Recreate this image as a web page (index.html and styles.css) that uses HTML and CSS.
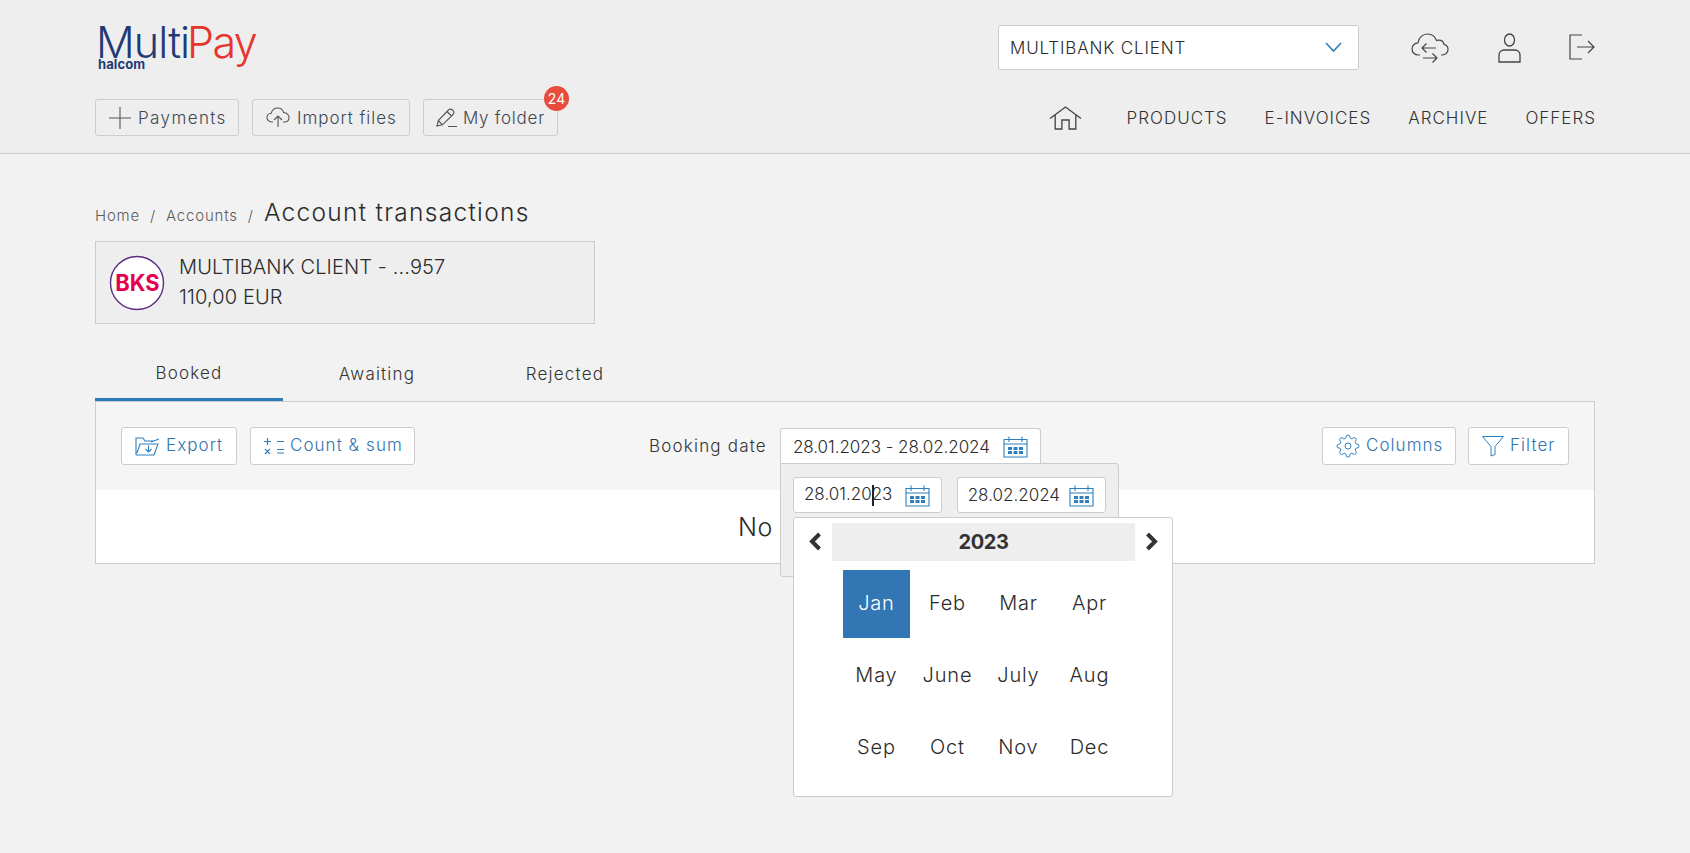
FILE: index.html
```html
<!DOCTYPE html>
<html lang="en">
<head>
<meta charset="utf-8">
<title>MultiPay - Account transactions</title>
<link rel="stylesheet" href="styles.css">
</head>
<body>
<svg class="sprite" aria-hidden="true">
  <symbol id="cal" viewBox="0 0 25 23">
    <path d="M1 4.5H24V22H1Z M1 9H24 M6 1.5V7 M19 1.5V7" fill="none" stroke="#2f7fbc" stroke-width="1.1"/>
    <path d="M5 12h4v3H5Z M10.5 12h4v3h-4Z M16 12h4v3h-4Z M5 16h4v3H5Z M10.5 16h4v3h-4Z M16 16h4v3h-4Z" fill="#2f7fbc"/>
  </symbol>
</svg>

<header class="header">
  <div class="top-row">
    <svg class="logo" width="160" height="48" viewBox="0 0 160 48" role="img" aria-label="MultiPay halcom">
      <text x="-1" y="33" class="logo-multi">Multi</text>
      <text x="90" y="33" class="logo-pay">Pay</text>
      <text x="1" y="44" class="logo-halcom">halcom</text>
    </svg>
    <div class="top-right">
      <div class="client-select">
        <span>MULTIBANK CLIENT</span>
        <svg width="17" height="11" viewBox="0 0 17 11"><path d="M1 1l7.5 8L16 1" fill="none" stroke="#2f7fbc" stroke-width="1.6"/></svg>
      </div>
      <svg class="ico-cloud" width="38" height="31" viewBox="0 0 38 31" fill="none" stroke="#444" stroke-width="1.2">
        <path d="M9 22H7.500C3.500 22 1 19.200 1 16c0-3.300 2.500-6 6-6.200C7.500 4.500 12 1 16.500 1c4.300 0 7.700 2.700 9 6.500 1-.5 1.600-.4 2.500-.4 2.800.1 4.500 2 5 4.300 2.500.6 4 2.700 4 5.100 0 3-2.500 5.500-5.500 5.500H30"/>
        <path d="M25 15H11 M15.500 10.500L11 15l4.500 4.500 M12 25H26 M21.500 20.500L26 25l-4.500 4.500"/>
      </svg>
      <svg class="ico-user" width="23" height="30" viewBox="0 0 23 30" fill="none" stroke="#444" stroke-width="1.3">
        <ellipse cx="11.500" cy="7" rx="5" ry="6"/>
        <path d="M1 29V22c0-3 2.500-5 5-5h11c2.500 0 5 2 5 5v7Z"/>
      </svg>
      <svg class="ico-exit" width="26" height="26" viewBox="0 0 26 26" fill="none" stroke="#444" stroke-width="1.200">
        <path d="M13 1H1V25H13 M8 13H25 M19 7l6 6-6 6"/>
      </svg>
    </div>
  </div>
  <div class="sub-row">
    <div class="actions">
      <a class="act act-pay">
        <svg width="22" height="22" viewBox="0 0 22 22" fill="none" stroke="#555" stroke-width="1.1"><path d="M0 11H22 M11 0V22"/></svg>
        <span>Payments</span>
      </a>
      <a class="act act-imp">
        <svg width="24" height="21" viewBox="0 0 24 21" fill="none" stroke="#555" stroke-width="1.100"><path d="M7 15H5.500C3 15 1 13 1 10.500S3 6.300 5.200 6.200C6 3 8.800 1 11.700 1c3 0 5.300 2 6.100 4.800 3-.2 5.200 2 5.200 4.700S21 15 18.500 15H17 M12 20V9 M8 13l4-4 4 4"/></svg>
        <span>Import files</span>
      </a>
      <a class="act act-fold">
        <svg width="21" height="19" viewBox="0 0 21 19" fill="none" stroke="#555" stroke-width="1.100"><path d="M1 18l1.300-5.500L12.500 2c1.200-1.200 2.800-1.200 4 0l.5.500c1.200 1.200 1.200 2.800 0 4L6.500 16.800Z M2.300 12.500l4.200 4.300 M11 3.500l4.500 4.500 M12 18.500H21"/></svg>
        <span>My folder</span>
        <b class="badge">24</b>
      </a>
    </div>
    <nav class="nav">
      <svg class="ico-home" width="33" height="24" viewBox="0 0 32 24" preserveAspectRatio="none" fill="none" stroke="#444" stroke-width="1.300"><path d="M1 12.500L16 1l15 11.500 M6 9v14h6.500v-9h7v9H26V9"/></svg>
      <a>PRODUCTS</a>
      <a>E-INVOICES</a>
      <a>ARCHIVE</a>
      <a>OFFERS</a>
    </nav>
  </div>
</header>

<main class="main">
  <div class="crumbs">
    <a>Home</a><i>/</i><a>Accounts</a><i>/</i><h1>Account transactions</h1>
  </div>
  <section class="account">
    <svg width="56" height="56" viewBox="0 0 56 56" role="img" aria-label="BKS">
      <circle cx="28" cy="28" r="26.500" fill="#fff" stroke="#5b2d84" stroke-width="1.400"/>
      <text class="bks" text-anchor="middle" transform="translate(28.500 36) scale(.95 1)">BKS</text>
    </svg>
    <div class="account-text">
      <div>MULTIBANK CLIENT - ...957</div>
      <div>110,00 EUR</div>
    </div>
  </section>

  <div class="tabs">
    <a class="tab tab-on">Booked</a>
    <a class="tab">Awaiting</a>
    <a class="tab">Rejected</a>
  </div>

  <section class="panel">
    <div class="toolbar">
      <a class="tool tool-export">
        <svg width="25" height="19" viewBox="0 0 25 19" fill="none" stroke="#2f7fbc" stroke-width="1.100"><path d="M1 18V1h7l2 3h10 M1 18h18l4-11H5L2 16 M16 5l8-3 M13.500 8.500V15 M10.500 12l3 3 3-3"/></svg>
        <span>Export</span>
      </a>
      <a class="tool tool-count">
        <svg width="20" height="19" viewBox="0 0 20 19" fill="none" stroke="#2f7fbc" stroke-width="1.200"><path d="M0 4.500H7 M3.500 1V8 M13 4.500H20 M1 12l5 5 M6 12l-5 5 M13 12.500H20 M13 16H20"/></svg>
        <span>Count &amp; sum</span>
      </a>
      <div class="date-group">
        <label class="date-label">Booking date</label>
        <div class="date-wrap">
          <div class="date-field">
            <span>28.01.2023 - 28.02.2024</span>
            <svg class="cal"><use href="#cal"/></svg>
          </div>
          <div class="date-pop">
            <div class="date-inputs">
              <div class="date-input"><span>28.01.20<u class="caret"></u>23</span><svg class="cal"><use href="#cal"/></svg></div>
              <div class="date-input"><span>28.02.2024</span><svg class="cal"><use href="#cal"/></svg></div>
            </div>
            <div class="picker">
              <div class="picker-head">
                <svg width="14" height="19" viewBox="0 0 14 19" fill="none" stroke="#333" stroke-width="4"><path d="M11.500 2L4 9.500l7.500 7.500"/></svg>
                <strong>2023</strong>
                <svg width="14" height="19" viewBox="0 0 14 19" fill="none" stroke="#333" stroke-width="4"><path d="M2.500 2L10 9.500 2.500 17"/></svg>
              </div>
              <div class="months">
                <span class="m m-on">Jan</span><span class="m">Feb</span><span class="m">Mar</span><span class="m">Apr</span>
                <span class="m">May</span><span class="m">June</span><span class="m">July</span><span class="m">Aug</span>
                <span class="m">Sep</span><span class="m">Oct</span><span class="m">Nov</span><span class="m">Dec</span>
              </div>
            </div>
          </div>
        </div>
      </div>
      <a class="tool tool-cols">
        <svg width="24" height="24" viewBox="0 0 24 24" fill="none" stroke="#2f7fbc" stroke-width="1"><circle cx="12" cy="12" r="3"/><path d="M19.400 15a1.650 1.650 0 0 0 .33 1.820l.06.06a2 2 0 0 1 0 2.830 2 2 0 0 1-2.830 0l-.06-.06a1.650 1.650 0 0 0-1.820-.33 1.650 1.650 0 0 0-1 1.510V21a2 2 0 0 1-2 2 2 2 0 0 1-2-2v-.09A1.650 1.650 0 0 0 9 19.400a1.650 1.650 0 0 0-1.820.33l-.06.06a2 2 0 0 1-2.830 0 2 2 0 0 1 0-2.830l.06-.06a1.650 1.650 0 0 0 .33-1.820 1.650 1.650 0 0 0-1.510-1H3a2 2 0 0 1-2-2 2 2 0 0 1 2-2h.09A1.650 1.650 0 0 0 4.600 9a1.650 1.650 0 0 0-.33-1.820l-.06-.06a2 2 0 0 1 0-2.830 2 2 0 0 1 2.830 0l.06.06a1.650 1.650 0 0 0 1.820.33H9a1.650 1.650 0 0 0 1-1.510V3a2 2 0 0 1 2-2 2 2 0 0 1 2 2v.09a1.650 1.650 0 0 0 1 1.510 1.650 1.650 0 0 0 1.820-.33l.06-.06a2 2 0 0 1 2.830 0 2 2 0 0 1 0 2.830l-.06.06a1.650 1.650 0 0 0-.33 1.820V9a1.650 1.650 0 0 0 1.510 1H21a2 2 0 0 1 2 2 2 2 0 0 1-2 2h-.09a1.650 1.650 0 0 0-1.510 1z"/></svg>
        <span>Columns</span>
      </a>
      <a class="tool tool-filter">
        <svg width="22" height="21" viewBox="0 0 22 21" fill="none" stroke="#2f7fbc" stroke-width="1"><path d="M.5 .5H21.500L13 10.500V18.500L9 20V10.500Z"/></svg>
        <span>Filter</span>
      </a>
    </div>
    <div class="empty">No</div>
  </section>
</main>
</body>
</html>
```
FILE: styles.css
```css
* { box-sizing: border-box; }
html, body { margin: 0; height: 100%; }
body {
  background: #f2f2f2;
  color: #333;
  font-family: Inter, "Open Sans", sans-serif;
  font-size: 17px;
  font-weight: 300;
  overflow: hidden;
}
.sprite { position: absolute; width: 0; height: 0; }

/* header */
.header {
  height: 154px;
  background: #eee;
  border-bottom: 1px solid #ccc;
  padding: 0 95px;
}
.top-row { display: flex; justify-content: space-between; height: 99px; }
.logo { margin: 25px 0 0 2px; overflow: visible; }
.logo-multi { font: 300 43px Inter, sans-serif; letter-spacing: -.9px; fill: #1f3a75; }
.logo-pay { font: 300 43px Inter, sans-serif; letter-spacing: -1.6px; fill: #e5352c; }
.logo-halcom { font: 700 13px Inter, sans-serif; letter-spacing: .1px; fill: #1f3a75; }
.top-right { display: flex; align-items: flex-start; }
.client-select {
  display: flex; justify-content: space-between; align-items: center;
  width: 361px; height: 45px; margin-top: 25px; padding: 0 16px 0 11px;
  background: #fff; border: 1px solid #ccc; border-radius: 3px;
  letter-spacing: .85px; color: #2b2b2b;
}
.ico-cloud { margin: 33px 0 0 52px; }
.ico-user { margin: 33px 0 0 49px; }
.ico-exit { margin: 34px 0 0 48px; }

.sub-row { display: flex; justify-content: space-between; }
.actions { display: flex; gap: 13px; }
.act {
  position: relative;
  display: flex; align-items: center; gap: 7px;
  height: 37px; padding-left: 13px;
  border: 1px solid #ccc; border-radius: 3px;
  letter-spacing: .95px; color: #3f4852;
}
.act-pay { width: 144px; letter-spacing: 1.4px; }
.act-imp { width: 158px; }
.act-fold { width: 135px; gap: 6px; padding-left: 12px; letter-spacing: .75px; }
.badge {
  position: absolute; top: -14px; right: -12px;
  width: 25px; height: 25px; border-radius: 50%;
  background: #e94b3c; color: #fff;
  font-size: 14px; font-weight: 400; letter-spacing: 0; line-height: 25px; text-align: center;
}
.nav { display: flex; align-items: center; gap: 37px; height: 37px; margin-right: -1px; letter-spacing: 1px; color: #333; }
.ico-home { margin-right: 8px; }

/* main */
.main { padding: 0 95px; }
.crumbs { display: flex; align-items: baseline; height: 87px; padding-top: 43px; color: #5c5c5c; font-size: 15px; letter-spacing: .8px; }
.crumbs i { font-style: normal; margin: 0 10px; }
.crumbs h1 { margin: 0; font-size: 24.500px; font-weight: 300; color: #2b2b2b; letter-spacing: 1.3px; }
.account {
  display: flex; align-items: center; gap: 14px;
  width: 500px; height: 83px; padding-left: 13px;
  background: #eee; border: 1px solid #ccc;
}
.account-text { margin-top: -2px; font-size: 20px; line-height: 30px; letter-spacing: .12px; color: #2b2b2b; }
.bks { font: 700 23px Inter, sans-serif; fill: #e4004f; }

.tabs { display: flex; height: 78px; margin-top: -1px; align-items: flex-end; }
.tab {
  width: 188px; height: 42px; text-align: center;
  letter-spacing: 1.2px; color: #333; line-height: 30px;
}
.tab-on { border-bottom: 3px solid #2a7ab8; line-height: 28px; }

.panel { background: #fff; border: 1px solid #ccc; height: 163px; }
.toolbar {
  display: flex; align-items: flex-start;
  height: 88px; padding: 25px 25px 0 25px; gap: 12px;
  background: #f5f5f5;
}
.tool {
  display: flex; align-items: center; gap: 6px;
  height: 38px; padding: 0 0 2px 13px;
  background: #fff; border: 1px solid #ccc; border-radius: 3px;
  letter-spacing: 1.05px; color: #3273b0;
}
.tool svg { margin-top: 2px; }
.tool-export { width: 116px; }
.tool-count { width: 165px; margin-left: 1px; }
.tool-cols { width: 134px; margin-left: auto; }
.tool-filter { width: 101px; }

.date-group { display: flex; align-items: center; gap: 13px; height: 38px; margin-left: 222px; color: #333; }
.date-label { letter-spacing: 1.2px; padding-bottom: 1px; }
.date-wrap { position: relative; }
.date-field {
  display: flex; align-items: center; justify-content: space-between;
  width: 261px; height: 36px; padding: 0 12px;
  background: #fff; border: 1px solid #ccc; border-bottom: 0; border-radius: 3px 3px 0 0;
  color: #2b2b2b; letter-spacing: -.05px;
}
.cal { width: 25px; height: 23px; flex: none; }
.date-pop {
  position: absolute; left: 0; top: 35px; z-index: 2;
  width: 339px; height: 114px;
  background: #eee; border: 1px solid #ccc; border-radius: 0 3px 3px 3px;
}
.date-inputs { display: flex; gap: 14.500px; padding: 13px 12px 0; }
.date-input {
  display: flex; align-items: center; justify-content: space-between;
  width: 149.500px; height: 36px; padding: 0 11px 0 10px;
  background: #fff; border: 1px solid #ccc; border-radius: 3px;
  color: #2b2b2b; letter-spacing: 0;
}
.caret { display: inline-block; width: 0; height: 21px; margin-right: -2px; border-left: 2px solid #222; vertical-align: middle; text-decoration: none; }
.picker {
  position: absolute; left: 12px; top: 53px;
  width: 380px; height: 280px;
  background: #fff; border: 1px solid #ccc; border-radius: 3px;
  padding: 5px 0 0;
}
.picker-head { display: flex; justify-content: space-between; align-items: flex-start; padding: 0 13px 0 14px; }
.picker-head svg { margin-top: 9px; }
.picker-head strong {
  width: 303px; height: 38px;
  background: #eee; text-align: center;
  font-size: 20px; line-height: 38px; font-weight: 700; letter-spacing: -.4px; color: #333;
}
.months { display: grid; grid-template-columns: repeat(4, 71px); grid-auto-rows: 72px; margin: 9px 0 0 47px; }
.m { display: flex; align-items: center; justify-content: center; height: 68px; padding-bottom: 3px; font-size: 20px; letter-spacing: .8px; color: #2b2b2b; }
.m-on { width: 67px; justify-self: center; background: #3276b4; color: #fff; }
.empty { padding: 21px 0 0 642px; font-size: 25px; line-height: 32px; letter-spacing: .5px; color: #2b2b2b; }
```
